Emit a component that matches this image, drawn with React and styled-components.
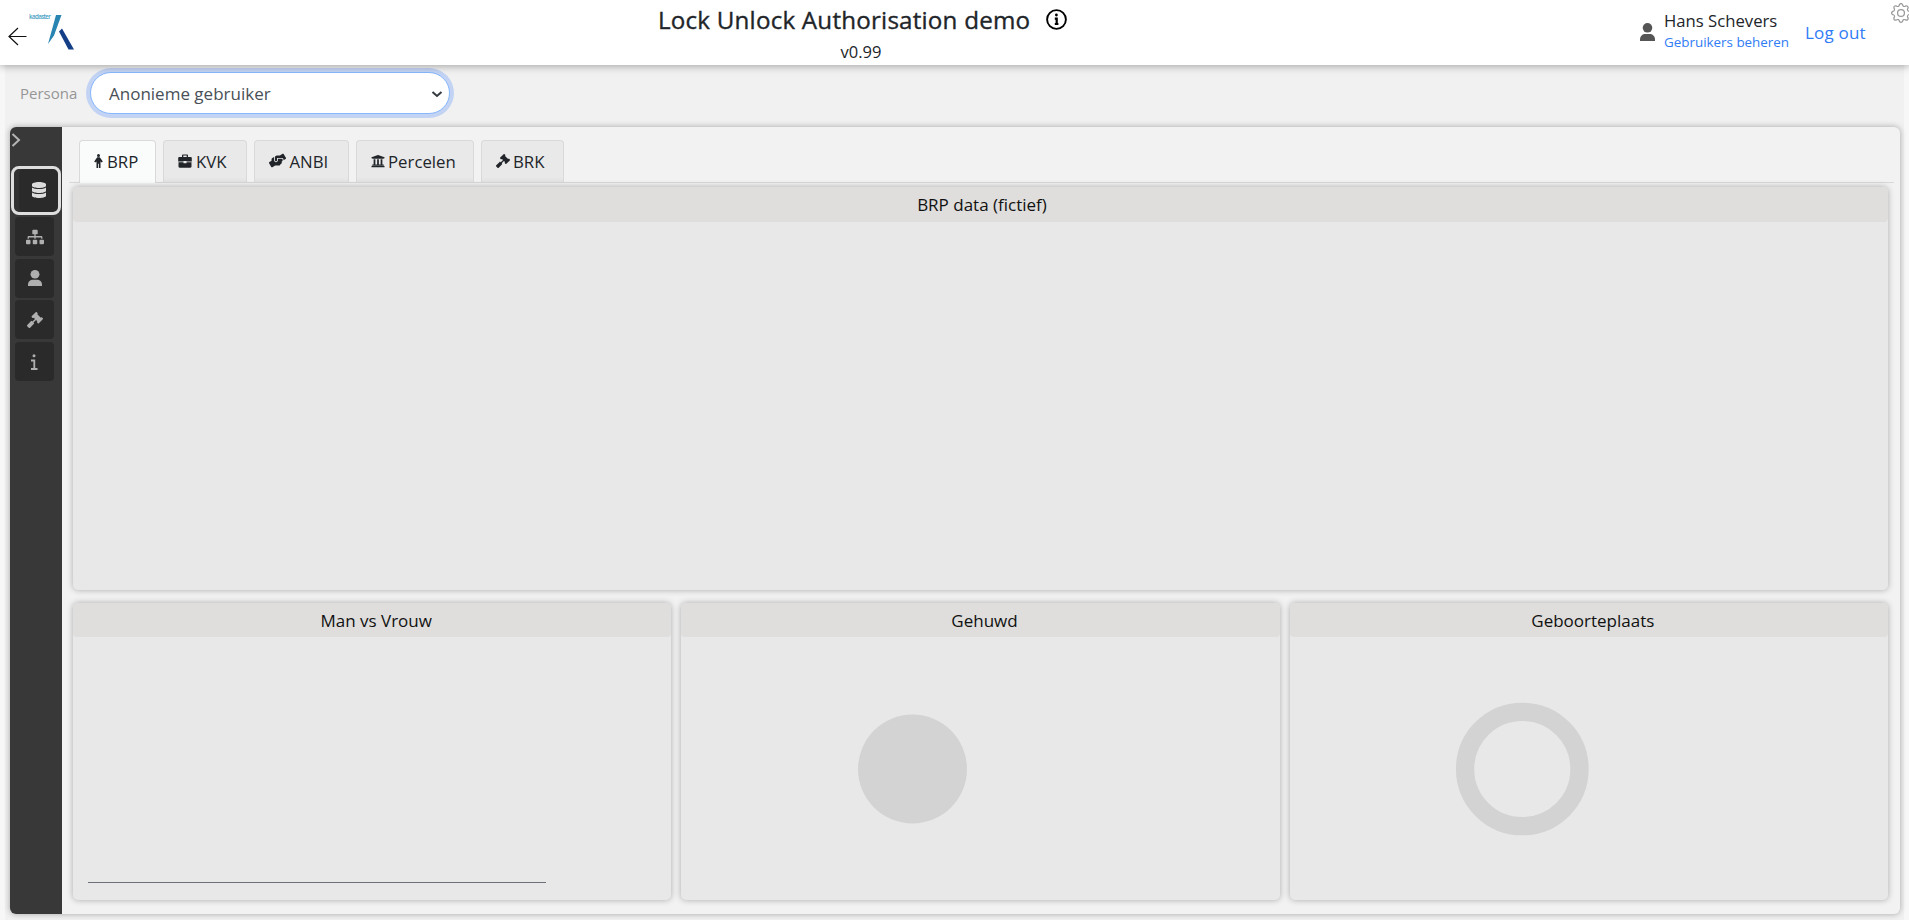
import React from "react";
import styled, { createGlobalStyle } from "styled-components";
import { FaUniversity, FaGavel, FaDatabase, FaSitemap, FaHandsHelping } from "react-icons/fa";
import { BsGear } from "react-icons/bs";

const Global = createGlobalStyle`
  * { box-sizing: border-box; }
  body { margin: 0; background: #f7f7f7; overflow: hidden; color: #212529;
    font-family: "Open Sans", "Noto Sans", sans-serif; font-size: 16.8px; line-height: 24px; }
`;

const Page = styled.div`
  height: 920px;
  display: flex;
  flex-direction: column;
  overflow: hidden;
`;
const Header = styled.header`
  position: relative;
  z-index: 2;
  height: 65px;
  flex: none;
  display: grid;
  grid-template-columns: 640px 444px 1fr;
  background: #fff;
  box-shadow: 0 1px 8px rgba(0, 0, 0, 0.34);
`;
const Brand = styled.div`
  display: flex;
  padding: 13px 0 0 8px;
`;
const BackArrow = styled.svg`
  width: 19px;
  height: 19px;
  margin-top: 14px;
`;
const Logo = styled.svg`
  width: 50px;
  height: 40px;
  margin-left: 1px;
`;
const Heading = styled.div`
  padding-left: 18px;
`;
const TitleRow = styled.div`
  display: flex;
  align-items: center;
  height: 39px;
  svg { width: 21px; height: 21px; margin-left: 15px; margin-bottom: 1px; color: #000; }
`;
const Title = styled.h1`
  margin: 0;
  width: 373px;
  white-space: nowrap;
  font-size: 24.2px;
  font-weight: 500;
  letter-spacing: 0.2px;
  -webkit-text-stroke: 0.35px #212529;
`;
const Version = styled.div`
  width: 406px;
  text-align: center;
  font-size: 16.5px;
  line-height: 26px;
`;
const Account = styled.div`
  display: flex;
  justify-content: flex-start;
  padding-left: 556px;
`;
const AccountIcon = styled.div`
  width: 24px;
  padding-top: 23px;
  line-height: 0;
  color: #555;
`;
const UserBlock = styled.div`
  width: 141px;
  padding-top: 9px;
  white-space: nowrap;
  line-height: 23px;
  font-size: 16.7px;
`;
const Link = styled.a`
  display: block;
  color: #2f7cf6;
  font-size: ${(p) => (p.$small ? "13.4px" : "17px")};
  line-height: ${(p) => (p.$small ? "20px" : "24px")};
  margin-top: ${(p) => (p.$small ? "0" : "21px")};
  letter-spacing: ${(p) => (p.$small ? "0" : "0.2px")};
  white-space: nowrap;
`;
const Settings = styled(BsGear)`
  width: 20px;
  height: 20px;
  margin: 3px 0 0 25px;
  flex: none;
  color: #999;
`;
const Body = styled.main`
  flex: 1;
  display: flex;
  flex-direction: column;
  margin: 0 5px;
  padding: 0 4px 6px 5px;
  background: #f1f1f1;
`;
const PersonaRow = styled.div`
  height: 62px;
  flex: none;
  display: flex;
  align-items: flex-start;
  padding: 7px 0 0 10px;
`;
const PersonaLabel = styled.label`
  width: 70px;
  line-height: 43px;
  font-size: 15px;
  color: #969696;
`;
const PersonaSelect = styled.div`
  width: 360px;
  height: 42px;
  display: flex;
  align-items: center;
  justify-content: space-between;
  padding: 1px 6px 0 18px;
  border: 1px solid #86b7fe;
  border-radius: 21px;
  background: #fff;
  box-shadow: 0 0 0 4px #c2d3f4;
  color: #495057;
  font-size: 17px;
  svg { width: 12px; height: 12px; }
`;
const Workspace = styled.section`
  flex: 1;
  display: flex;
  border-radius: 6px;
  background: #f2f2f2;
  box-shadow: 0 0 6px rgba(0, 0, 0, 0.32);
`;
const Sidebar = styled.nav`
  width: 52px;
  display: flex;
  flex-direction: column;
  padding-left: 1px;
  border-radius: 6px 0 0 6px;
  background: #383838;
`;
const Expand = styled.svg`
  width: 10px;
  height: 16px;
  margin: 5px 0 18px;
`;
const NavButton = styled.button`
  display: flex;
  align-items: center;
  justify-content: center;
  flex: none;
  width: ${(p) => (p.$active ? "50px" : "39px")};
  height: ${(p) => (p.$active ? "49px" : "39px")};
  margin: ${(p) => (p.$active ? "0 0 2px 0" : "0 0 2.7px 4px")};
  padding: ${(p) => (p.$active ? "0 0 1px 5px" : "0")};
  border: ${(p) => (p.$active ? "3px solid #dedede" : "0")};
  border-radius: ${(p) => (p.$active ? "8px" : "4px")};
  background: #2a2a2a;
  box-shadow: ${(p) => (p.$active ? "inset 5px 0 0 #323232" : "none")};
  color: ${(p) => (p.$active ? "#dcdcdc" : "#afafaf")};
`;
const Content = styled.div`
  flex: 1;
  min-width: 0;
  padding: 13px 6px 0 7px;
`;
const Tabs = styled.div`
  display: flex;
  gap: 7px;
  height: 43px;
  padding-left: 10px;
  border-bottom: 1px solid #d9d9d9;
`;
const Tab = styled.button`
  width: ${(p) => p.$width}px;
  height: ${(p) => (p.$active ? 43 : 42)}px;
  display: flex;
  align-items: center;
  gap: ${(p) => p.$gap ?? 4}px;
  padding: 0 0 0 14px;
  border: 1px solid #d9d9d9;
  border-bottom: 0;
  border-radius: 4px 4px 0 0;
  background: ${(p) => (p.$active ? "#fafcfb" : "linear-gradient(#e9e9e9 88%, #e2e2e2)")};
  font: inherit;
  color: #212529;
  svg { flex: none; margin-top: -2px; }
`;
const Cards = styled.div`
  display: grid;
  grid-template-columns: repeat(3, 1fr);
  grid-template-rows: 403px 297px;
  gap: 13px 10px;
  padding: 4px 6px 0 4px;
`;
const Card = styled.article`
  grid-column: ${(p) => (p.$wide ? "1 / -1" : "auto")};
  overflow: hidden;
  border-radius: 5px;
  background: #e8e8e8;
  box-shadow: 0 0 6px rgba(0, 0, 0, 0.3);
`;
const CardTitle = styled.h2`
  margin: 0;
  height: ${(p) => (p.$wide ? 35 : 34)}px;
  padding-left: ${(p) => (p.$wide ? 3 : 8)}px;
  border-radius: 4px;
  background: #dfdedc;
  color: #111;
  text-align: center;
  font-size: 17px;
  font-weight: 400;
  line-height: 36px;
`;
const Chart = styled.svg`
  display: block;
  width: 100%;
  height: 263px;
`;

function PersonGlyph({ width, height }) {
  return (
    <svg width={width} height={height} viewBox="0 0 15 18" preserveAspectRatio="none" fill="currentColor">
      <circle cx="7.500" cy="4.800" r="4.800" />
      <path d="M0 18V16.500C0 13 2.500 11 5.500 11H9.500C12.500 11 15 13 15 16.500V18z" />
    </svg>
  );
}

function InfoGlyph() {
  return (
    <svg width="9" height="16" viewBox="0 0 9 16" fill="none" stroke="currentColor" strokeWidth="1.8">
      <circle cx="4" cy="1.8" r="1.5" fill="currentColor" stroke="none" />
      <path d="M1 6.5H4.300V15M1 15H7.500" />
    </svg>
  );
}

function ManGlyph() {
  return (
    <svg width="9" height="14" viewBox="0 0 9 14" fill="currentColor">
      <circle cx="4.500" cy="1.500" r="1.500" />
      <path d="M3.200 3.300H5.800L8.800 7.600L7.700 8.500L6.500 7.400V14H4.900V9.800H4.100V14H2.500V7.400L1.300 8.500L.2 7.600z" />
    </svg>
  );
}

function Briefcase() {
  return (
    <svg width="14" height="14" viewBox="0 0 14 14" fill="currentColor">
      <path d="M4 3V1.500C4 .8 4.500.4 5 .4H9c.6 0 1 .4 1 1.100V3h2.500c.8 0 1.300.5 1.300 1.300v3.200H8.500V7h-3v.5H.2V4.300C.2 3.500.7 3 1.500 3zM5.300 3h3.400V1.600H5.300zM.5 8.300h5v1h3v-1h5v4.300c0 .7-.4 1.100-1.100 1.100H1.600c-.7 0-1.100-.4-1.100-1.100z" />
    </svg>
  );
}

const navItems = [
  { icon: <FaDatabase size={16} />, active: true },
  { icon: <FaSitemap size={18} /> },
  { icon: <PersonGlyph width={14} height={16} /> },
  { icon: <FaGavel size={16} /> },
  { icon: <InfoGlyph /> },
];

const tabs = [
  { label: "BRP", icon: <ManGlyph />, width: 77, active: true },
  { label: "KVK", icon: <Briefcase />, width: 84 },
  { label: "ANBI", icon: <FaHandsHelping size={17} />, width: 95, gap: 3.5 },
  { label: "Percelen", icon: <FaUniversity size={14} />, width: 118, gap: 3 },
  { label: "BRK", icon: <FaGavel size={14} />, width: 83, gap: 3 },
];

export default function App() {
  return (
    <Page>
      <Global />
      <Header>
        <Brand>
          <BackArrow viewBox="0 0 19 19" fill="none" stroke="#111" strokeWidth="1.200">
            <path d="M10 1L1 9.500L10 18M1 9.500H18.500" />
          </BackArrow>
          <Logo viewBox="0 0 50 40">
            <text x="1" y="6.300" fontSize="6.200" fontWeight="600" textLength="22" fill="#4a9fc4">kadaster</text>
            <path d="M28 2h5.500L26 22.500L20 31z" fill="#2884b0" />
            <path d="M31 18.500L34 15.500L46 36.500H40.500z" fill="#143f86" />
          </Logo>
        </Brand>
        <Heading>
          <TitleRow>
            <Title>Lock Unlock Authorisation demo</Title>
            <svg viewBox="0 0 21 21" fill="none" stroke="#000" strokeWidth="1.900">
              <circle cx="10.500" cy="10.500" r="9.400" />
              <circle cx="10.400" cy="6" r="1.400" fill="#000" stroke="none" />
              <path strokeWidth="2.200" d="M8.800 9.600H10.700V15M8.800 15H12.400" />
            </svg>
          </TitleRow>
          <Version>v0.99</Version>
        </Heading>
        <Account>
          <AccountIcon><PersonGlyph width={15} height={18} /></AccountIcon>
          <UserBlock>
            Hans Schevers
            <Link $small>Gebruikers beheren</Link>
          </UserBlock>
          <Link>Log out</Link>
          <Settings />
        </Account>
      </Header>
      <Body>
        <PersonaRow>
          <PersonaLabel>Persona</PersonaLabel>
          <PersonaSelect>
            Anonieme gebruiker
            <svg viewBox="0 0 12 12" fill="none" stroke="#343a40" strokeWidth="2">
              <path d="M1.500 4L6 8L10.500 4" />
            </svg>
          </PersonaSelect>
        </PersonaRow>
        <Workspace>
          <Sidebar>
            <Expand viewBox="0 0 10 16" fill="none" stroke="#b5b5b5" strokeWidth="2">
              <path d="M1.500 2L8 8L1.500 14" />
            </Expand>
            {navItems.map((item, i) => (
              <NavButton key={i} $active={item.active}>{item.icon}</NavButton>
            ))}
          </Sidebar>
          <Content>
            <Tabs>
              {tabs.map((t) => (
                <Tab key={t.label} $width={t.width} $active={t.active} $gap={t.gap}>
                  {t.icon}
                  {t.label}
                </Tab>
              ))}
            </Tabs>
            <Cards>
              <Card $wide>
                <CardTitle $wide>BRP data (fictief)</CardTitle>
              </Card>
              <Card>
                <CardTitle>Man vs Vrouw</CardTitle>
                <Chart>
                  <path d="M15 245.500H473" stroke="#6e7079" />
                </Chart>
              </Card>
              <Card>
                <CardTitle>Gehuwd</CardTitle>
                <Chart>
                  <circle cx="231.500" cy="132" r="54.500" fill="#d3d3d3" />
                </Chart>
              </Card>
              <Card>
                <CardTitle>Geboorteplaats</CardTitle>
                <Chart>
                  <circle cx="232.300" cy="132" r="57.200" fill="none" stroke="#d3d3d3" strokeWidth="18.300" />
                </Chart>
              </Card>
            </Cards>
          </Content>
        </Workspace>
      </Body>
    </Page>
  );
}
